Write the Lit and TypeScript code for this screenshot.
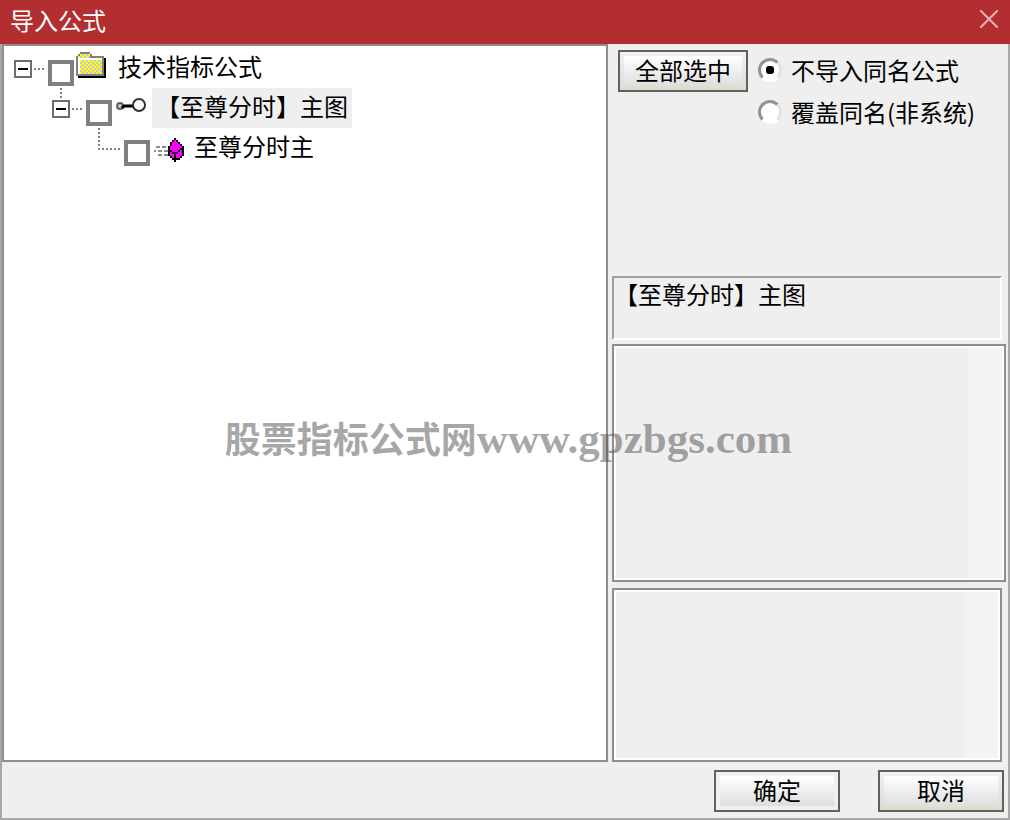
import { LitElement, html, css, svg, nothing } from "lit";
import { customElement, state } from "lit/decorators.js";

type NodeIcon = "folder" | "key" | "gem";
interface TreeNode { id: string; label: string; level: number; icon: NodeIcon; leaf?: boolean; }

const NODES: TreeNode[] = [
  { id: "root", label: "技术指标公式", level: 0, icon: "folder" },
  { id: "group", label: "【至尊分时】主图", level: 1, icon: "key" },
  { id: "formula", label: "至尊分时主", level: 2, icon: "gem", leaf: true },
];

// Pixel icons: one character per 2px cell.
const COLORS: Record<string, string> = {
  g: "#808080", k: "#000", y: "#ffff00", c: "#c8c8c8", w: "#fff", m: "#ff00ff", s: "#8c8c8c",
};
const FOLDER = [
  "..ggggg........",
  ".gycycyg.......",
  "gycycycggggggg.",
  "gwwwwwwwwwwwwgk",
  "gwycycycycycygk",
  "gwcycycycycycgk",
  "gwycycycycycygk",
  "gwcycycycycycgk",
  "gwycycycycycygk",
  "gwcycycycycycgk",
  "gwycycycycycygk",
  "ggggggggggggggk",
  ".kkkkkkkkkkkkkk",
];
const GEM = [
  "..........k....",
  ".........kmk...",
  "........kmmmk..",
  "........kmmmmk.",
  ".ss.ss.kmmmmmmk",
  ".......kmmmmmkk",
  "s.ss.sskkmmmkmk",
  ".......kmkkkmmk",
  "..ss.sskmmkmmmk",
  "........kmkmmk.",
  ".........kkkk..",
  "..........k....",
];

function pixels(rows: string[]) {
  const w = Math.max(...rows.map((r) => r.length));
  return html`<svg aria-hidden="true" width=${w * 2} height=${rows.length * 2} viewBox="0 0 ${w} ${rows.length}" shape-rendering="crispEdges">
    ${rows.flatMap((r, y) => [...r].map((ch, x) =>
      COLORS[ch] ? svg`<rect x=${x} y=${y} width="1" height="1" fill=${COLORS[ch]}></rect>` : nothing))}
  </svg>`;
}

const keyIcon = () => html`<svg aria-hidden="true" width="30" height="16" viewBox="0 0 30 16" fill="none">
  <circle cx="4" cy="9" r="3" fill="#c8c8c8" stroke="#606060" stroke-width="2"></circle>
  <path d="M6 11L8 9H17" stroke="#000" stroke-width="3"></path>
  <circle cx="23" cy="8" r="6" fill="#fff" stroke="#303030" stroke-width="2"></circle>
</svg>`;

const ICONS: Record<NodeIcon, () => unknown> = {
  folder: () => pixels(FOLDER),
  key: keyIcon,
  gem: () => pixels(GEM),
};

@customElement("app-root")
export class AppRoot extends LitElement {
  @state() private mode = "skip";
  @state() private checked: Record<string, boolean> = {};

  static styles = css`
    :host {
      display: flex; flex-direction: column; box-sizing: border-box; position: relative;
      min-height: 100vh; background: #efefef; color: #000;
      font: 24px/28px "Noto Sans CJK SC", "Liberation Sans", sans-serif;
    }
    * { box-sizing: border-box; }
    svg { display: block; }
    button, textarea { font: inherit; color: inherit; border-radius: 0; margin: 0; }
    .title {
      display: flex; align-items: flex-start; justify-content: space-between;
      height: 44px; padding: 6px 10px; background: #b22e31; color: #fff;
    }
    .title h1 { margin: 0; font-size: 24px; font-weight: 400; }
    .close { padding: 4px 2px; border: 0; background: none; }
    .body {
      flex: 1; display: flex; flex-direction: column; gap: 8px;
      border: solid #a8a8a8; border-width: 0 2px 2px; padding-bottom: 6px;
    }
    .columns { flex: 1; display: grid; grid-template-columns: minmax(0, 1fr) 396px; gap: 4px; }
    .tree { border: 2px solid #8e8e8e; background: #fff; padding: 2px 10px; }
    .row { display: flex; height: 40px; }
    .row.level1 { padding-left: 38px; }
    .row.level2 { padding-left: 76px; }
    .lead { width: 34px; }
    .joint { display: flex; }
    .toggle {
      display: grid; place-items: center; width: 18px; height: 18px; padding: 0;
      border: 2px solid #6e6e6e; background: #fff;
    }
    .check {
      appearance: none; width: 26px; height: 26px; margin: 12px 0 0;
      border: 4px solid #808080; background: #fff;
    }
    .check:checked { background: #808080; }
    .node { display: flex; }
    .icon { width: 40px; }
    .folder { padding: 4px 2px; }
    .key { padding: 9px 4px; }
    .gem { padding: 10px 4px; }
    .name { padding: 0 4px; line-height: 36px; }
    .name.selected { background: #efefef; }
    .side { display: flex; flex-direction: column; padding-right: 2px; }
    .options { display: flex; height: 232px; padding: 6px; gap: 10px; }
    .btn {
      width: 126px; height: 42px; padding: 0 0 2px; border: 2px solid #606060;
      background: linear-gradient(#fff, #dedede) 4px 4px / calc(100% - 8px) calc(100% - 8px) no-repeat padding-box, #efefef;
    }
    .btn.wide { width: 130px; }
    .btn.warm {
      background: linear-gradient(#fff, #dedede) 4px 4px / calc(100% - 8px) calc(100% - 8px) no-repeat padding-box,
        linear-gradient(#f1f1f1, #dedbd0);
    }
    .radios { margin: 0; padding: 0; border: 0; min-width: 0; }
    .option { display: flex; align-items: center; gap: 9px; height: 42px; padding-bottom: 2px; }
    .dot {
      appearance: none; display: grid; place-items: center; width: 24px; height: 24px; margin: 0;
      border: 3px solid; border-color: #949494 #e3e3e3 #fff #949494; border-radius: 50%; background: #fff;
    }
    .dot:checked::before { content: ""; width: 8px; height: 8px; border-radius: 3px; background: #000; }
    .info {
      height: 64px; margin-right: 4px; padding: 2px 0 0; border: 2px solid;
      border-color: #a0a0a0 #fff #fff #a0a0a0;
    }
    .memos { flex: 1; display: grid; grid-template-rows: 238fr 174fr; gap: 6px; padding-top: 4px; }
    .memo {
      width: 100%; height: 100%; min-height: 60px; padding: 4px 38px 4px 4px; resize: none;
      border: 2px solid #8e8e8e; box-shadow: inset 0 0 0 2px #fff;
      background: linear-gradient(to left, #f4f3f1 36px, #efefef 36px);
    }
    .memo.second { width: calc(100% - 4px); }
    .footer { display: flex; justify-content: flex-end; gap: 38px; padding-right: 4px; }
    .mark {
      position: absolute; left: 0; right: 0; top: 412px; padding-left: 7px; text-align: center;
      font-size: 36px; font-weight: 700; line-height: 50px; color: rgba(80, 80, 80, 0.5);
      pointer-events: none; white-space: nowrap;
    }
    .site { font-family: "Liberation Serif", serif; font-size: 43px; }
  `;

  private toggleCheck(id: string, e: Event) {
    this.checked = { ...this.checked, [id]: (e.target as HTMLInputElement).checked };
  }

  private selectAll() {
    this.checked = Object.fromEntries(NODES.map((n) => [n.id, true]));
  }

  private lead(n: TreeNode) {
    const dash = "#808080";
    if (n.leaf) {
      return html`<svg class="lead" width="34" height="40" aria-hidden="true" fill="none" stroke=${dash} stroke-width="2" stroke-dasharray="2 2">
        <path d="M9 0V22M8 21H30"></path></svg>`;
    }
    return html`<div class="lead">
      <svg width="18" height="12" aria-hidden="true">
        ${n.level ? svg`<path d="M9 0V10" stroke=${dash} stroke-width="2" stroke-dasharray="2 2"></path>` : nothing}
      </svg>
      <div class="joint">
        <button class="toggle" aria-label="折叠"><svg width="10" height="2"><rect width="10" height="2"></rect></svg></button>
        <svg width="16" height="18" aria-hidden="true"><path d="M2 9H12" stroke=${dash} stroke-width="2" stroke-dasharray="2 2"></path></svg>
      </div>
    </div>`;
  }

  render() {
    return html`
      <header class="title">
        <h1>导入公式</h1>
        <button class="close" aria-label="关闭">
          <svg width="18" height="18" viewBox="0 0 18 18" stroke="#e3b4b5" stroke-width="2"><path d="M0 0L18 18M18 0L0 18"></path></svg>
        </button>
      </header>
      <main class="body">
        <div class="columns">
          <div class="tree">
            ${NODES.map((n) => html`
              <div class="row level${n.level}">
                ${this.lead(n)}
                <input class="check" type="checkbox" id=${n.id} .checked=${!!this.checked[n.id]}
                  @change=${(e: Event) => this.toggleCheck(n.id, e)}>
                <label class="node" for=${n.id}>
                  <span class="icon ${n.icon}">${ICONS[n.icon]()}</span>
                  <span class="name ${n.id === "group" ? "selected" : ""}">${n.label}</span>
                </label>
              </div>`)}
          </div>
          <div class="side">
            <div class="options">
              <button class="btn wide warm" @click=${this.selectAll}>全部选中</button>
              <fieldset class="radios" aria-label="同名公式">
                ${[["skip", "不导入同名公式"], ["cover", "覆盖同名(非系统)"]].map(([v, t]) => html`
                  <label class="option"><input class="dot" type="radio" name="mode" .checked=${this.mode === v}
                    @change=${() => { this.mode = v; }}>${t}</label>`)}
              </fieldset>
            </div>
            <div class="info">【至尊分时】主图</div>
            <div class="memos">
              <textarea class="memo" readonly aria-label="公式说明"></textarea>
              <textarea class="memo second" readonly aria-label="公式内容"></textarea>
            </div>
          </div>
        </div>
        <div class="footer">
          <button class="btn">确定</button>
          <button class="btn warm">取消</button>
        </div>
      </main>
      <div class="mark">股票指标公式网<span class="site">www.gpzbgs.com</span></div>
    `;
  }
}
